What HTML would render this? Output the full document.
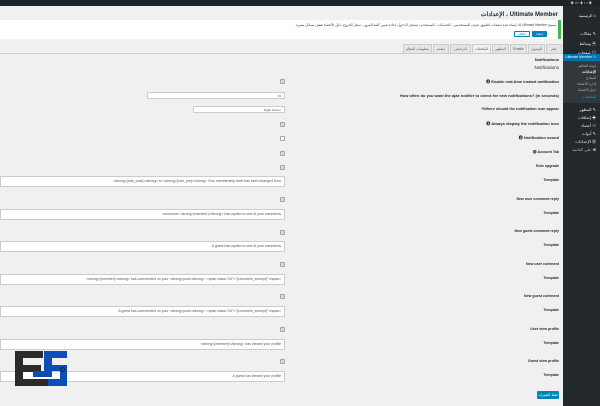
<!DOCTYPE html>
<html><head><meta charset="utf-8"><style>
*{margin:0;padding:0;box-sizing:border-box}
body{width:600px;height:406px;overflow:hidden;background:#f0f0f0;font-family:"Liberation Sans","Noto Sans CJK SC",sans-serif;position:relative;color:#23282d}
.a{position:absolute}
.lbl{position:absolute;right:41px;font-size:4px;font-weight:bold;white-space:nowrap;color:#23282d}
.cb{position:absolute;left:280px;width:5px;height:5px;border:1px solid #a0a5aa;background:#fff;border-radius:1px}
.cb.on{background:#d5dde3}
.inp{position:absolute;left:0;width:285px;height:11px;background:#fff;border:1px solid #ccc;font-size:3.5px;color:#555;text-align:right;padding:2px 3px;white-space:nowrap;overflow:hidden}
.side{position:absolute;right:0;top:6px;width:37px;height:400px;background:#23282d}
.mi{position:absolute;right:4px;font-size:4px;color:#eee;white-space:nowrap}
.tab{position:absolute;top:44px;height:10px;background:#e5e5e5;border:1px solid #ccc;font-size:3.5px;color:#555;text-align:center;line-height:9px}
</style></head><body>
<div class="a" style="left:0;top:0;width:600px;height:6px;background:#1d2327"></div>
<div class="a" style="right:8px;top:1px;font-size:3.5px;color:#ccc">◉ ▪▪▪ ✚ ▪ ▪ ◉</div>
<div class="side">
<div class="mi" style="top:7px">الرئيسية ⌂</div>
<div class="mi" style="top:25px">مقالات ✎</div>
<div class="mi" style="top:35px">وسائط ▣</div>
<div class="mi" style="top:44px">صفحات ▤</div>
<div class="a" style="right:0;top:48px;width:37px;height:7px;background:#0073aa"></div>
<div class="mi" style="top:49px;font-size:3.5px;color:#fff">Ultimate Member ⚇</div>
<div class="a" style="right:0;top:55px;width:37px;height:42px;background:#32373c"></div>
<div class="mi" style="top:58px;font-size:3.5px;color:#bbb">لوحة التحكم</div>
<div class="mi" style="top:64px;font-size:3.5px;color:#fff;font-weight:bold">الإعدادات</div>
<div class="mi" style="top:70px;font-size:3.5px;color:#bbb">النماذج</div>
<div class="mi" style="top:76px;font-size:3.5px;color:#bbb">إدارة الأعضاء</div>
<div class="mi" style="top:82px;font-size:3.5px;color:#bbb">دليل الأعضاء</div>
<div class="mi" style="top:89px;font-size:3.5px;color:#00a0d2">الملحقات</div>
<div class="mi" style="top:101px">المظهر ✎</div>
<div class="mi" style="top:109px">إضافات ✚</div>
<div class="mi" style="top:117px">أعضاء ⚇</div>
<div class="mi" style="top:125px">أدوات ✎</div>
<div class="mi" style="top:133px">الإعدادات ▦</div>
<div class="mi" style="top:141px;color:#aaa">طي القائمة ◀</div>
</div>
<div class="a" style="right:42px;top:11px;font-size:6px;font-weight:bold;direction:rtl">Ultimate Member ، الإعدادات</div>
<div class="a" style="left:0;top:20px;width:561px;height:19px;background:#fff;border-right:3px solid #46b450"></div>
<div class="a" style="right:44px;top:23px;font-size:3.3px;color:#444;direction:rtl;white-space:nowrap">يسمح Ultimate Member لك إنشاء عدة صفحات لتطبيق، تعرف المستخدمين ، الحسابات ، المستخدم ، تسجيل الدخول، إعادة تعيين كلمة المرور ، سجل الخروج، دليل الأعضاء تفعيل مسائل مميزة.</div>
<div class="a" style="left:532px;top:31px;width:15px;height:6px;background:#0085ba;border-radius:1px;font-size:3px;color:#fff;text-align:center;line-height:6px">إنشاء صفحات</div>
<div class="a" style="left:514px;top:31px;width:16px;height:6px;background:#f7f7f7;border:1px solid #0085ba;border-radius:1px;font-size:3px;color:#0085ba;text-align:center;line-height:4px">تجاهل</div>
<div class="tab" style="left:546px;width:16px">عام</div>
<div class="tab" style="left:528px;width:17px">الوصول</div>
<div class="tab" style="left:510px;width:17px">Emails</div>
<div class="tab" style="left:492px;width:17px">المظهر</div>
<div class="tab" style="left:472px;width:19px;background:#f1f1f1;border-bottom-color:#f1f1f1">الملحقات</div>
<div class="tab" style="left:450px;width:21px">الترخيص</div>
<div class="tab" style="left:433px;width:16px">متقدم</div>
<div class="tab" style="left:403px;width:29px">معلومات النظام</div>
<div class="a" style="left:0;top:53px;width:563px;height:1px;background:#ccc"></div>
<div class="lbl" style="top:57px">Notifications</div>
<div class="lbl" style="top:65px;font-weight:normal;font-size:4.5px">Notifications</div>
<div class="lbl" style="top:79px">❸ Enable real-time instant notification</div>
<div class="cb on" style="top:79px"></div>
<div class="lbl" style="top:93px">How often do you want the ajax notifier to check for new notifications? (in seconds)</div>
<div class="inp" style="top:92px;left:147px;width:138px;height:7px;padding:1px 3px;font-size:3px">15</div>
<div class="lbl" style="top:107px;font-size:3.8px">?Where should the notification icon appear</div>
<div class="inp" style="top:106px;left:193px;width:92px;height:7px;padding:1px 3px;font-size:3px">Right bottom</div>
<div class="lbl" style="top:121px">❸ Always display the notification icon</div>
<div class="cb on" style="top:122px"></div>
<div class="lbl" style="top:135px">❸ Notification sound</div>
<div class="cb" style="top:136px"></div>
<div class="lbl" style="top:150px;font-size:3.6px">❸ Account Tab</div>
<div class="cb on" style="top:151px"></div>
<div class="lbl" style="top:164px;font-size:3.6px">Role upgrade</div>
<div class="cb on" style="top:165px"></div>
<div class="lbl" style="top:178px;font-size:3.6px">Template</div>
<div class="inp" style="top:176px">&lt;strong&gt;{role_post}&lt;/strong&gt; to &lt;strong&gt;{role_pre}&lt;/strong&gt; Your membership level has been changed from</div>
<div class="lbl" style="top:197px;font-size:3.6px">New user comment reply</div>
<div class="cb on" style="top:197px"></div>
<div class="lbl" style="top:211px;font-size:3.6px">Template</div>
<div class="inp" style="top:209px">comments &lt;strong&gt;{member}&lt;/strong&gt; has replied to one of your comments</div>
<div class="lbl" style="top:229px;font-size:3.6px">New guest comment reply</div>
<div class="cb on" style="top:230px"></div>
<div class="lbl" style="top:243px;font-size:3.6px">Template</div>
<div class="inp" style="top:241px">A guest has replied to one of your comments</div>
<div class="lbl" style="top:262px;font-size:3.6px">New user comment</div>
<div class="cb on" style="top:262px"></div>
<div class="lbl" style="top:276px;font-size:3.6px">Template</div>
<div class="inp" style="top:274px">&lt;strong&gt;{member}&lt;/strong&gt; has commented on your &lt;strong&gt;post&lt;/strong&gt;. &lt;span class="b2"&gt;"{comment_excerpt}"&lt;/span&gt;</div>
<div class="lbl" style="top:294px;font-size:3.6px">New guest comment</div>
<div class="cb on" style="top:294px"></div>
<div class="lbl" style="top:308px;font-size:3.6px">Template</div>
<div class="inp" style="top:306px">A guest has commented on your &lt;strong&gt;post&lt;/strong&gt;. &lt;span class="b2"&gt;"{comment_excerpt}"&lt;/span&gt;</div>
<div class="lbl" style="top:327px;font-size:3.6px">User view profile</div>
<div class="cb on" style="top:327px"></div>
<div class="lbl" style="top:341px;font-size:3.6px">Template</div>
<div class="inp" style="top:339px">&lt;strong&gt;{member}&lt;/strong&gt; has viewed your profile</div>
<div class="lbl" style="top:359px;font-size:3.6px">Guest view profile</div>
<div class="cb on" style="top:359px"></div>
<div class="lbl" style="top:373px;font-size:3.6px">Template</div>
<div class="inp" style="top:371px">A guest has viewed your profile</div>
<div class="a" style="left:537px;top:391px;width:22px;height:8px;background:#0085ba;border-radius:1px;font-size:3.3px;color:#fff;text-align:center;line-height:8px">حفظ التغييرات</div>
<div class="a" style="left:15px;top:351px;width:8px;height:35px;background:#2b2b2b"></div>
<div class="a" style="left:15px;top:351px;width:28px;height:7px;background:#2b2b2b"></div>
<div class="a" style="left:15px;top:365px;width:26px;height:7px;background:#2b2b2b"></div>
<div class="a" style="left:15px;top:379px;width:33px;height:7px;background:#2b2b2b"></div>
<div class="a" style="left:44px;top:351px;width:23px;height:7px;background:#0a4fb5"></div>
<div class="a" style="left:44px;top:351px;width:8px;height:26px;background:#0a4fb5"></div>
<div class="a" style="left:33px;top:371px;width:19px;height:6px;background:#0a4fb5"></div>
<div class="a" style="left:52px;top:365px;width:15px;height:6px;background:#0a4fb5"></div>
<div class="a" style="left:60px;top:365px;width:7px;height:21px;background:#0a4fb5"></div>
<div class="a" style="left:48px;top:379px;width:19px;height:7px;background:#0a4fb5"></div>
<div class="a" style="left:60px;top:367px;width:5px;height:5px;border:1px solid #222;border-radius:50%"></div>
</body></html>
